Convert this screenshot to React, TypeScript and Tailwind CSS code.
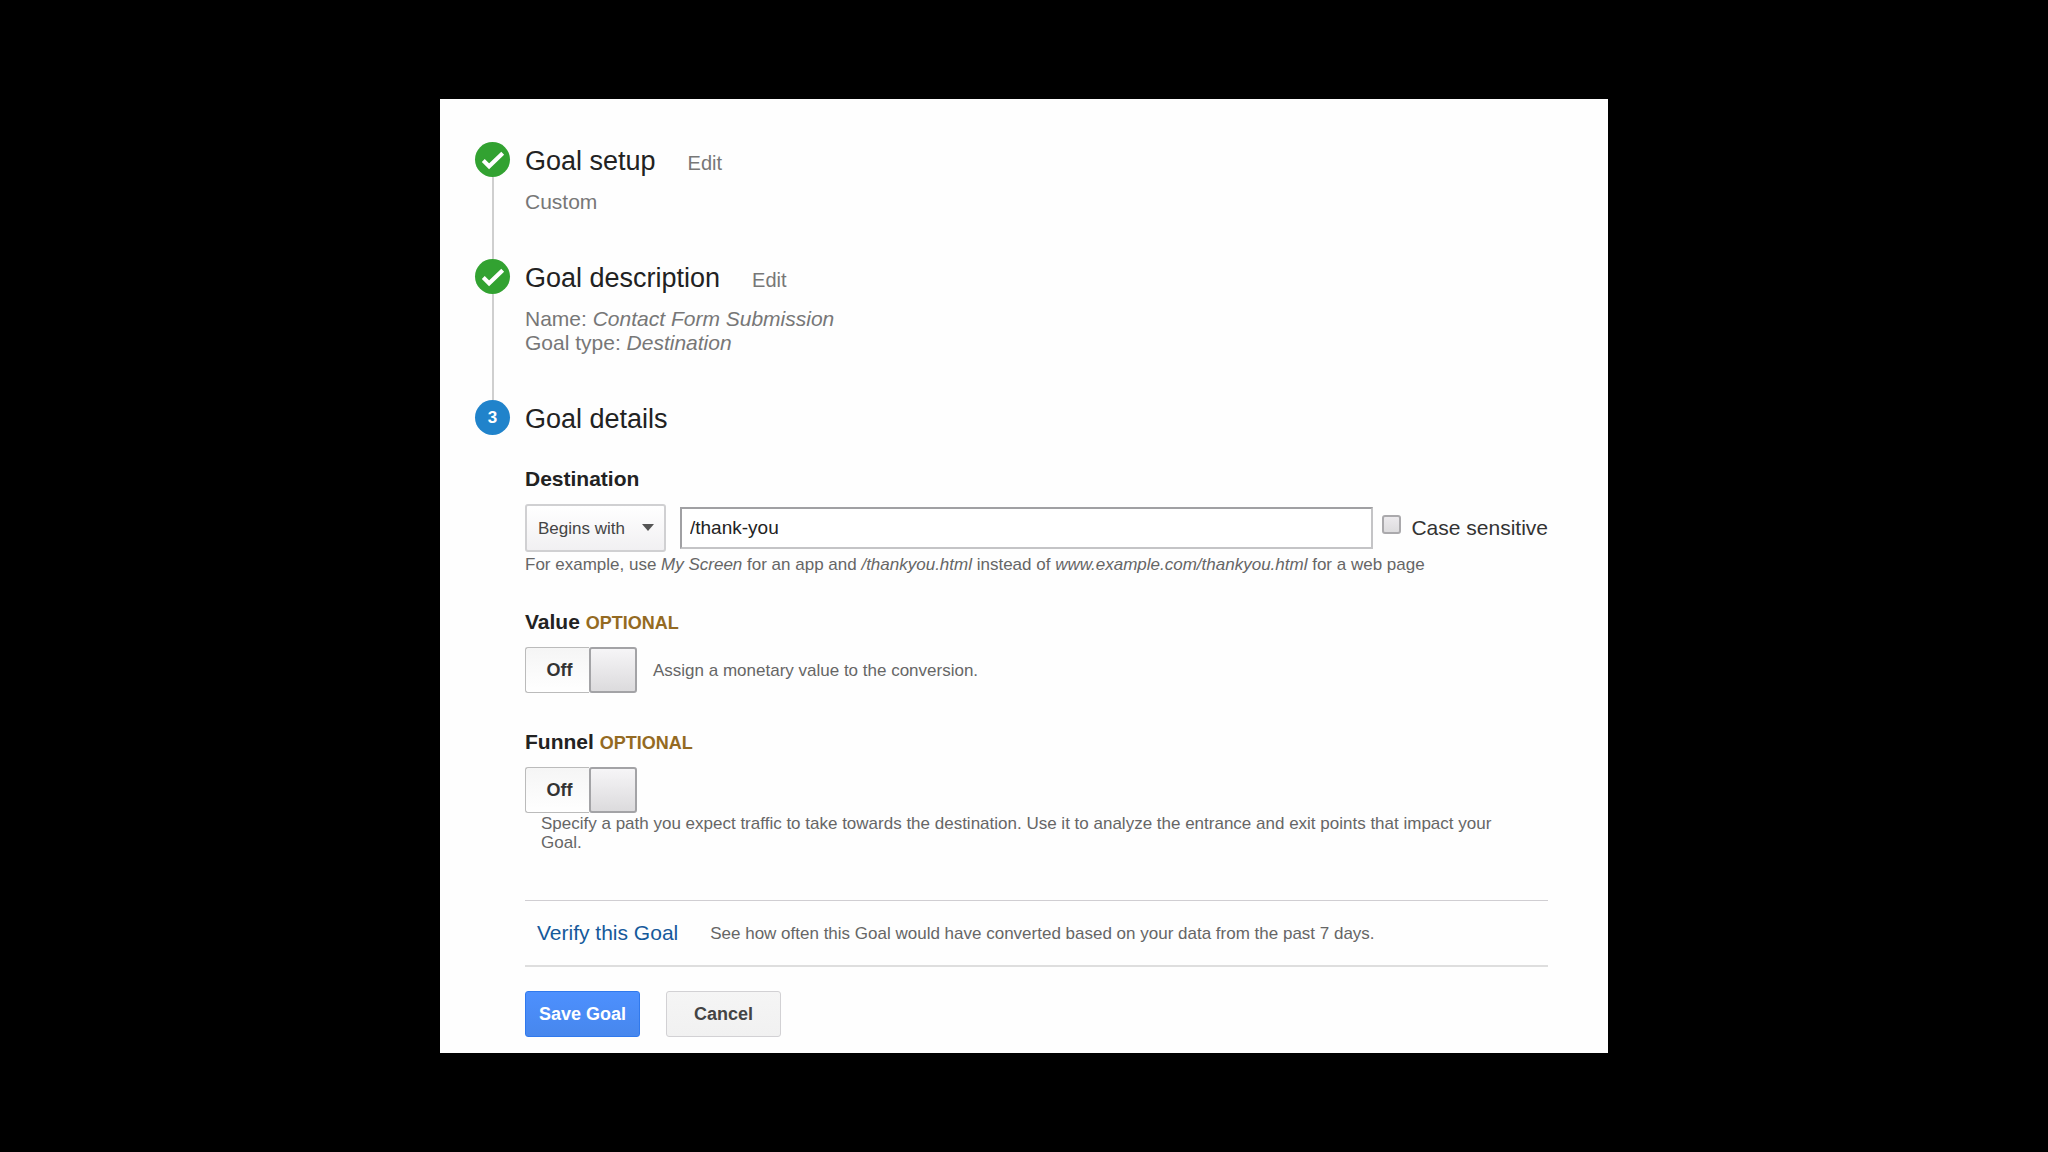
import React, { useState } from 'react';

interface StepProps {
  title: string;
  badge: React.ReactNode;
  editable?: boolean;
  last?: boolean;
  children: React.ReactNode;
}

const DoneBadge = () => (
  <span className="flex size-[35px] shrink-0 items-center justify-center rounded-full bg-[#32a231]">
    <svg viewBox="0 0 36 36" className="size-[35px]" fill="none" stroke="#fff" strokeWidth="4.2" aria-label="Completed">
      <path d="M8.5 19l6 6L28.5 11.5" />
    </svg>
  </span>
);

const NumberBadge = ({ value }: { value: number }) => (
  <span className="flex size-[35px] shrink-0 items-center justify-center rounded-full bg-[#2083cb] pt-px text-[17px] font-bold text-white">
    {value}
  </span>
);

const Step: React.FC<StepProps> = ({ title, badge, editable, last, children }) => (
  <li className="flex gap-[15px]">
    <div className="flex flex-col items-center">
      {badge}
      {!last && <span className="w-[2px] flex-1 bg-[#cfcfcf]" />}
    </div>
    <div className={last ? 'min-w-0 flex-1' : 'min-w-0 flex-1 pb-[45px]'}>
      <div className="flex items-baseline gap-8">
        <h2 className="text-[27px] leading-[38px] text-[#222]">{title}</h2>
        {editable && (
          <button type="button" className="text-[20px] leading-6 text-[#777]">
            Edit
          </button>
        )}
      </div>
      {children}
    </div>
  </li>
);

interface ToggleProps {
  id: string;
  label: string;
}

const Toggle: React.FC<ToggleProps> = ({ id, label }) => {
  const [on, setOn] = useState(false);

  return (
    <button
      id={id}
      type="button"
      role="switch"
      aria-checked={on}
      aria-label={label}
      onClick={() => setOn(!on)}
      className="flex h-[46px] w-28 shrink-0 rounded-[3px] bg-linear-to-b from-[#f5f5f5] to-white text-[18px] font-bold text-[#333]"
    >
      <span className="flex h-full flex-1 items-center justify-center rounded-l-[3px] border border-r-0 border-[#bbb] pl-1">
        {on ? 'On' : 'Off'}
      </span>
      <span className="h-full w-12 rounded-[3px] border-2 border-[#a3a3a6] bg-linear-to-b from-[#f6f5f7] to-[#dcdbdd]" />
    </button>
  );
};

const OptionalTitle = ({ children }: { children: string }) => (
  <h3 className="text-[21px] leading-6 font-bold text-[#222]">
    {children} <span className="text-[18px] text-[#946a22]">OPTIONAL</span>
  </h3>
);

const GoalDetails = () => {
  const [destination, setDestination] = useState('/thank-you');

  return (
    <form className="text-[17px] leading-[19px] text-[#666]" onSubmit={(e) => e.preventDefault()}>
      <section className="mt-[29px]">
        <h3 className="text-[21px] leading-6 font-bold text-[#222]">
          <label htmlFor="destination">Destination</label>
        </h3>
        <div className="mt-[13px] flex items-center">
          <div className="relative shrink-0">
            <select
              aria-label="Match type"
              className="h-12 w-[141px] appearance-none rounded-[3px] border-2 border-[#d0d0d2] bg-linear-to-b from-white to-[#f1f0f2] pl-[11px] text-[17px] text-[#444]"
            >
              <option>Begins with</option>
              <option>Equals to</option>
              <option>Regular expression</option>
            </select>
            <svg viewBox="0 0 12 7" className="pointer-events-none absolute top-5 right-3 h-[7px] w-3" fill="#555">
              <path d="M0 0h12L6 7z" />
            </svg>
          </div>
          <input
            id="destination"
            type="text"
            value={destination}
            onChange={(e) => setDestination(e.target.value)}
            className="ml-[14px] h-[42px] min-w-0 flex-1 border-2 border-[#c4c4c6] border-t-[#a0a0a3] border-l-[#a0a0a3] bg-white px-2 text-[19px] text-[#222]"
          />
          <input
            id="case-sensitive"
            type="checkbox"
            className="mr-[10px] mb-2 ml-[9px] size-[19px] shrink-0 appearance-none rounded-[3px] border-2 border-[#aaa9ac] bg-linear-to-b from-[#eceaed] to-[#dddcde] checked:bg-[#4d90fe]"
          />
          <label htmlFor="case-sensitive" className="text-[21px] leading-6 whitespace-nowrap text-[#333]">
            Case sensitive
          </label>
        </div>
        <p className="mt-[3px]">
          For example, use <em>My Screen</em> for an app and <em>/thankyou.html</em> instead of{' '}
          <em>www.example.com/thankyou.html</em> for a web page
        </p>
      </section>

      <section className="mt-9">
        <OptionalTitle>Value</OptionalTitle>
        <div className="mt-3 flex items-center gap-4">
          <Toggle id="value" label="Value" />
          <p>Assign a monetary value to the conversion.</p>
        </div>
      </section>

      <section className="mt-[37px]">
        <OptionalTitle>Funnel</OptionalTitle>
        <div className="mt-3">
          <Toggle id="funnel" label="Funnel" />
          <p className="mt-px px-4">
            Specify a path you expect traffic to take towards the destination. Use it to analyze the entrance and exit
            points that impact your Goal.
          </p>
        </div>
      </section>

      <div className="mt-12 flex items-center gap-8 border-t border-b-2 border-t-[#d0ced2] border-b-[#dedede] px-3 py-5">
        <a href="#verify" className="text-[21px] leading-6 whitespace-nowrap text-[#15599b]">
          Verify this Goal
        </a>
        <p>See how often this Goal would have converted based on your data from the past 7 days.</p>
      </div>

      <div className="mt-6 flex gap-[26px] text-[18px] font-bold">
        <button
          type="submit"
          className="h-[46px] w-[115px] rounded-[3px] border border-[#3079ed] bg-linear-to-b from-[#4d90fe] to-[#4787ed] text-white"
        >
          Save Goal
        </button>
        <button
          type="button"
          className="h-[46px] w-[115px] rounded-[3px] border border-[#d2d1d4] bg-linear-to-b from-[#f5f5f5] to-[#f1f1f1] text-[#444]"
        >
          Cancel
        </button>
      </div>
    </form>
  );
};

const App: React.FC = () => (
  <div className="flex min-h-screen items-center justify-center bg-black font-['Liberation_Sans',Arial,sans-serif]">
    <main className="w-full max-w-[1168px] bg-[#fefefe] pt-[43px] pr-[60px] pb-4 pl-[35px]">
      <ol>
        <Step title="Goal setup" badge={<DoneBadge />} editable>
          <p className="mt-[10px] text-[21px] leading-6 text-[#777]">Custom</p>
        </Step>
        <Step title="Goal description" badge={<DoneBadge />} editable>
          <p className="mt-[10px] text-[21px] leading-6 text-[#777]">
            Name: <em>Contact Form Submission</em>
            <br />
            Goal type: <em>Destination</em>
          </p>
        </Step>
        <Step title="Goal details" badge={<NumberBadge value={3} />} last>
          <GoalDetails />
        </Step>
      </ol>
    </main>
  </div>
);

export default App;
